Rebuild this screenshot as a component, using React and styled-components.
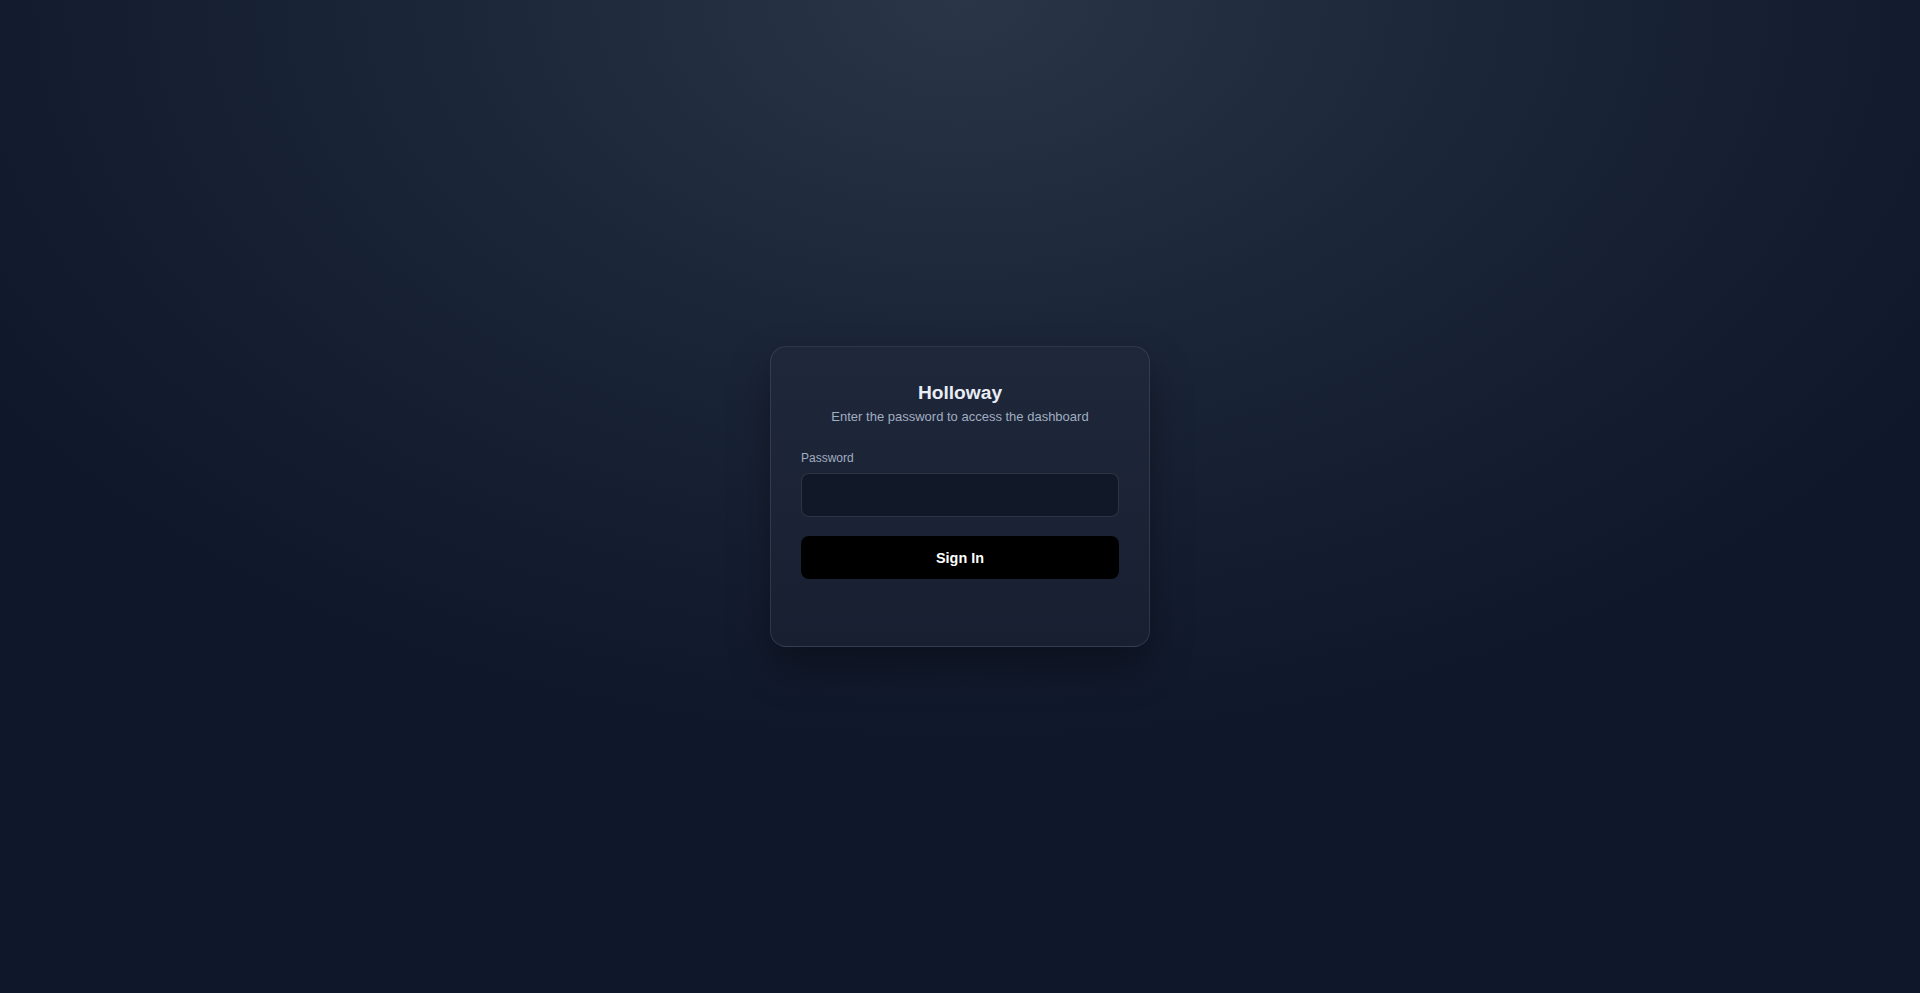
import React, {useState} from 'react';
import styled, {createGlobalStyle} from 'styled-components';

const GlobalStyle = createGlobalStyle`
    html, body, #root {
      margin: 0;
      height: 100%;
    }

    body {
      font-family: "Liberation Sans", Arial, sans-serif;
      background: #0f172a;
    }
`;

const Page = styled.div`
    min-height: 100vh;
    display: flex;
    align-items: center;
    justify-content: center;
    background: radial-gradient(ellipse 60% 75% at 50% 0%, #2a3547 0%, #1c2639 45%, #0f172a 100%);
`;

const Card = styled.form`
    box-sizing: border-box;
    width: 380px;
    padding: 34px 30px 67px;
    border: 1px solid rgba(255, 255, 255, 0.1);
    border-radius: 16px;
    background: linear-gradient(180deg, #1f273a 0%, #171f31 100%);
    box-shadow: 0 20px 40px rgba(0, 0, 0, 0.35);
    display: flex;
    flex-direction: column;
`;

const Header = styled.header`
    text-align: center;
    margin-bottom: 24px;

    h1 {
      margin: 0;
      font-size: 19.2px;
      line-height: 23px;
      font-weight: 700;
      color: #e8edf5;
    }

    p {
      margin: 4px 0 0;
      font-size: 13px;
      line-height: 18px;
      color: #a0aec0;
    }
`;

const Label = styled.label`
    font-size: 12px;
    line-height: 16px;
    color: #a0aec0;
    margin-bottom: 7px;
`;

const Input = styled.input`
    box-sizing: border-box;
    height: 44px;
    width: 100%;
    padding: 0 14px;
    border: 1px solid rgba(255, 255, 255, 0.12);
    border-radius: 8px;
    background: #111827;
    color: #e8edf5;
    font-size: 14px;
    font-family: inherit;
    outline: none;
`;

const Button = styled.button`
    margin-top: 19px;
    height: 43px;
    border: none;
    border-radius: 8px;
    background: #000;
    color: #fff;
    font-family: inherit;
    font-size: 14.4px;
    font-weight: 700;
    cursor: pointer;
`;

export default function App() {
    const [password, setPassword] = useState('');

    return (
        <Page>
            <GlobalStyle/>
            <Card onSubmit={e => e.preventDefault()}>
                <Header>
                    <h1>Holloway</h1>
                    <p>Enter the password to access the dashboard</p>
                </Header>
                <Label htmlFor='password'>Password</Label>
                <Input id='password'
                       type='password'
                       value={password}
                       onChange={e => setPassword(e.target.value)}/>
                <Button type='submit'>Sign In</Button>
            </Card>
        </Page>
    );
}
